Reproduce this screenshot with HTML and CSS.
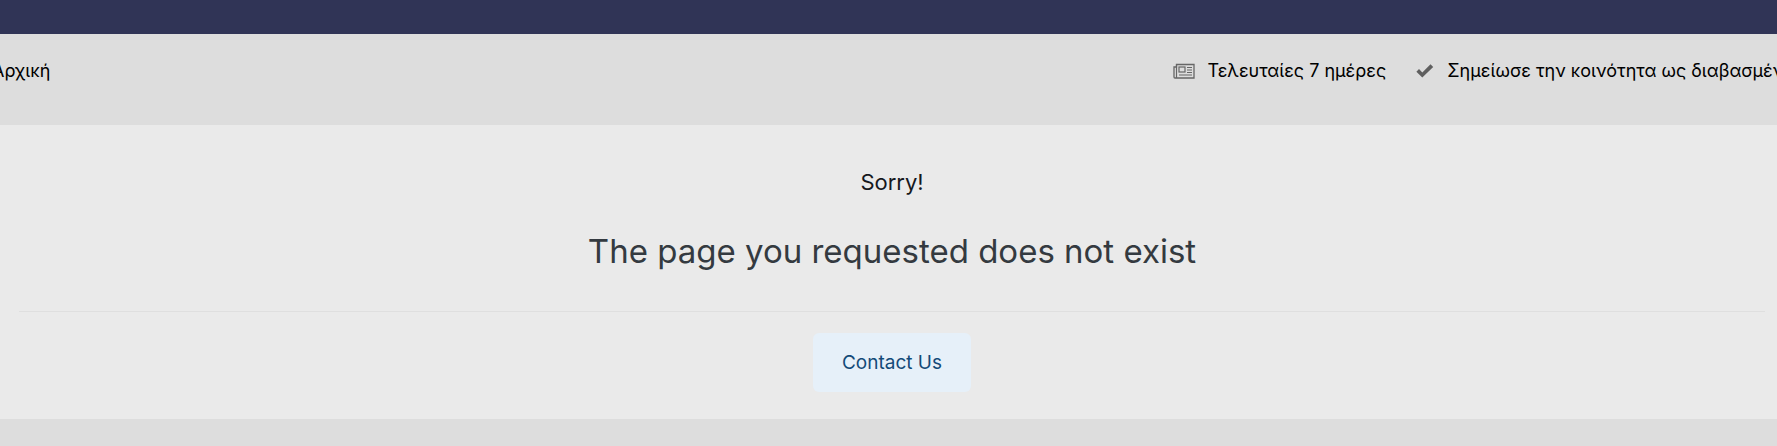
FILE: index.html
```html
<!DOCTYPE html>
<html lang="el">
<head>
<meta charset="utf-8">
<title>Page not found</title>
<link rel="stylesheet" href="styles.css">
</head>
<body>
<header class="topbar"></header>
<nav class="subnav">
  <div class="subnav-inner">
    <a class="nav-link">Αρχική</a>
    <div class="nav-actions">
      <a class="nav-link nav-link-news">
        <svg class="icon icon-news" viewBox="0 0 22 16" aria-hidden="true">
          <path class="news-frame" d="M3.5 1.5h17.5v13.5H2A1 1 0 0 1 1 14V4h2.500z"/>
          <path class="news-line" d="M3.500 1.500V15"/>
          <rect class="news-line" x="6" y="4" width="6" height="5"/>
          <path class="news-line" d="M14 4.500h5M14 7h5M14 9.500h5M6 12h13"/>
        </svg>
        Τελευταίες 7 ημέρες
      </a>
      <a class="nav-link">
        <svg class="icon icon-check" viewBox="0 0 18 14" aria-hidden="true">
          <path d="M6.300 13.600 0.400 7.700 3 5.100l3.300 3.300L14.500 0.300l2.700 2.600z"/>
        </svg>
        Σημείωσε την κοινότητα ως διαβασμένη
      </a>
    </div>
  </div>
</nav>
<main class="panel">
  <p class="sorry">Sorry!</p>
  <h1 class="title">The page you requested does not exist</h1>
  <hr class="divider">
  <div class="actions"><a class="button">Contact Us</a></div>
</main>
</body>
</html>
```
FILE: styles.css
```css
* { box-sizing: border-box; }
html, body { height: 100%; }
body {
  margin: 0;
  overflow: hidden;
  background: #dddddd;
  font-family: Inter, "Noto Sans", sans-serif;
  color: #111;
}
.topbar { height: 34px; background: #303456; }
.subnav { height: 91px; padding-top: 23px; overflow: hidden; }
.subnav-inner {
  display: flex;
  justify-content: space-between;
  margin: 0 -17px 0 -8px;
}
.nav-actions { display: flex; gap: 30px; }
.nav-link {
  display: flex;
  align-items: center;
  gap: 13px;
  font-size: 18px;
  line-height: 27px;
  white-space: nowrap;
  color: #000;
}
.nav-link-news { gap: 12px; }
.icon { display: block; flex: none; }
.icon-news { width: 22px; height: 16px; }
.news-frame { fill: none; stroke: #666; stroke-width: 1.3; }
.news-line { fill: none; stroke: #666; stroke-width: 1.2; }
.icon-check { width: 18px; height: 14px; fill: #5f5f5f; }
.panel {
  height: 294px;
  background: #eaeaea;
  padding: 41px 12px 0 19px;
  text-align: center;
}
.sorry {
  margin: 0;
  font-size: 22px;
  line-height: 32px;
  color: #16181d;
}
.title {
  margin: 29px 0 0;
  font-size: 33px;
  line-height: 48px;
  font-weight: 400;
  color: #343a40;
}
.divider {
  margin: 36px 0 0;
  border: 0;
  border-top: 1px solid #dfdfdf;
}
.actions { display: flex; justify-content: center; padding-top: 21px; }
.button {
  display: block;
  width: 158px;
  height: 59px;
  border-radius: 6px;
  background: #e6f0f9;
  color: #134a78;
  font-size: 19px;
  line-height: 59px;
}
```
